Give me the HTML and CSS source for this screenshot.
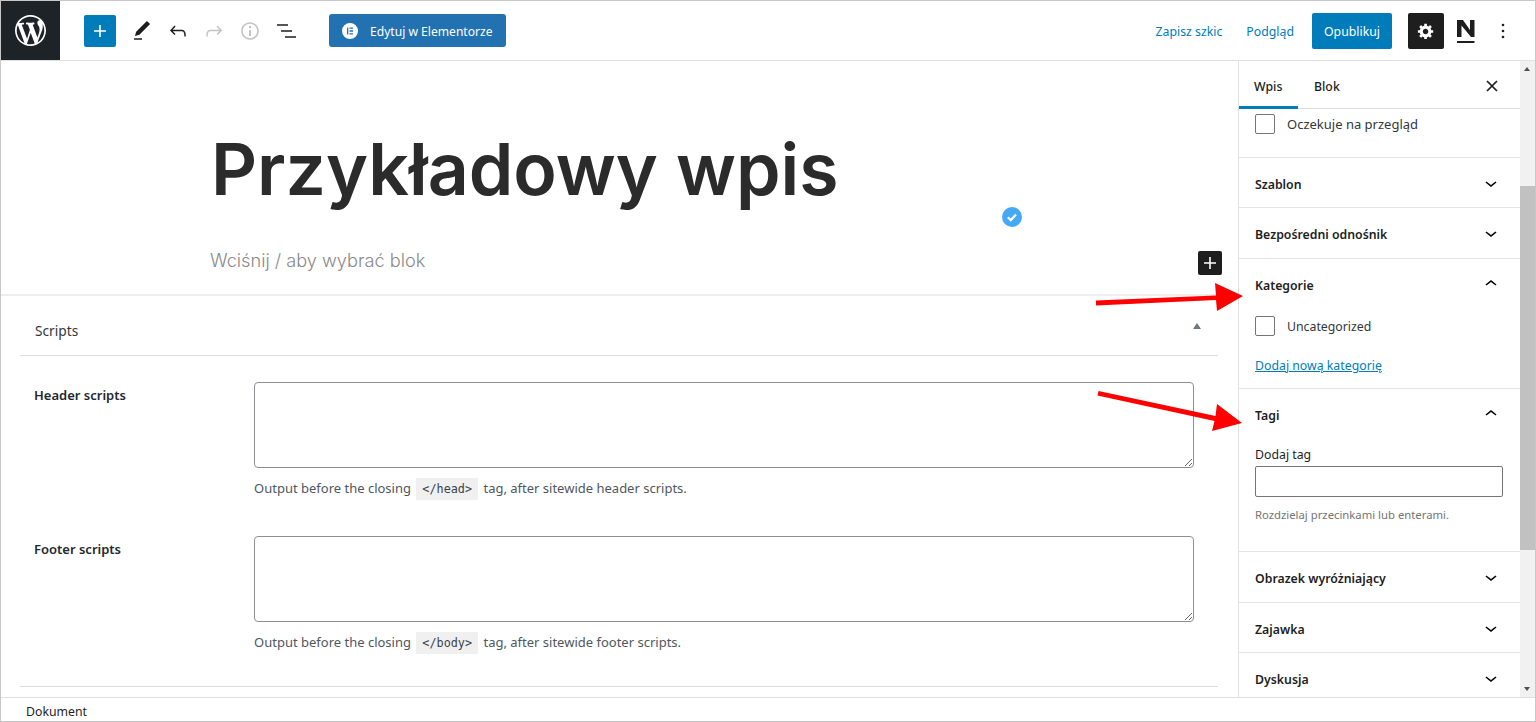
FILE: index.html
```html
<!DOCTYPE html>
<html lang="pl">
<head>
  <meta charset="UTF-8">
  <meta name="viewport" content="width=device-width, initial-scale=1.0">
  <title>Przykładowy wpis</title>
  <link rel="stylesheet" href="styles.css">
</head>
<body>
<div class="app">
  <!-- Top bar -->
  <header class="topbar">
    <div class="wp-logo">
      <svg viewBox="0 0 20 20" width="31" height="31"><path fill="#fff" d="M20 10c0-5.51-4.49-10-10-10C4.48 0 0 4.49 0 10c0 5.52 4.48 10 10 10 5.51 0 10-4.48 10-10zM7.78 15.37L4.37 6.22c.55-.02 1.17-.08 1.17-.08.5-.06.44-1.13-.06-1.11 0 0-1.45.11-2.37.11-.18 0-.37 0-.58-.01C4.12 2.69 6.87 1.11 10 1.11c2.33 0 4.45.87 6.05 2.34-.68-.11-1.65.39-1.65 1.58 0 .74.45 1.36.9 2.1.35.61.55 1.36.55 2.46 0 1.49-1.4 5-1.4 5l-3.03-8.37c.54-.02.82-.17.82-.17.5-.05.44-1.25-.06-1.22 0 0-1.44.12-2.38.12-.87 0-2.33-.12-2.33-.12-.5-.03-.56 1.2-.06 1.22l.92.08 1.26 3.41zM17.41 10c.24-.64.74-1.87.43-4.25.7 1.29 1.05 2.71 1.05 4.25 0 3.29-1.73 6.24-4.4 7.78.97-2.59 1.94-5.2 2.92-7.78zM6.1 18.09C3.12 16.65 1.11 13.53 1.11 10c0-1.3.23-2.48.72-3.59C3.25 10.3 4.67 14.2 6.1 18.09zm4.03-6.63l2.58 6.98c-.86.29-1.76.45-2.71.45-.79 0-1.57-.11-2.29-.33.81-2.38 1.62-4.74 2.42-7.1z"/></svg>
    </div>
    <div class="tools">
      <div class="btn-add">
        <svg viewBox="0 0 24 24" width="24" height="24"><path fill="#fff" d="M18 11.2h-5.2V6h-1.6v5.2H6v1.6h5.2V18h1.6v-5.2H18z"/></svg>
      </div>
      <div class="tool">
        <svg viewBox="0 0 24 24" width="24" height="24"><path fill="#1e1e1e" d="M20.1 5.1L16.9 2 6.2 12.7l-1.3 4.4 4.5-1.3L20.1 5.1zM4 20.8h8v-1.5H4v1.5z"/></svg>
      </div>
      <div class="tool">
        <svg viewBox="0 0 24 24" width="24" height="24"><path fill="#1e1e1e" d="M18.3 11.7c-.6-.6-1.4-.9-2.3-.9H6.7l2.9-3.3-1.1-1-4.5 5L8.5 16l1-1-2.7-2.7H16c.5 0 .9.2 1.3.5 1 1 1 3.4 1 4.5v.3h1.5v-.2c0-1.5 0-4.3-1.5-5.7z"/></svg>
      </div>
      <div class="tool">
        <svg viewBox="0 0 24 24" width="24" height="24"><path fill="#c4c4c4" d="M15.6 6.5l-1.1 1 2.9 3.3H8c-.9 0-1.7.3-2.3.9-1.4 1.5-1.4 4.2-1.4 5.6v.2h1.5v-.3c0-1.1 0-3.5 1-4.5.3-.3.7-.5 1.3-.5h9.2L14.5 15l1.1 1.1 4.6-4.6-4.6-5z"/></svg>
      </div>
      <div class="tool">
        <svg viewBox="0 0 24 24" width="24" height="24"><path fill="#c4c4c4" d="M12 3.2c-4.8 0-8.8 3.9-8.8 8.8 0 4.8 3.9 8.8 8.8 8.8 4.8 0 8.8-3.9 8.8-8.8 0-4.8-4-8.8-8.8-8.8zm0 16c-4 0-7.2-3.3-7.2-7.2C4.8 8 8 4.8 12 4.8s7.2 3.3 7.2 7.2c0 4-3.2 7.2-7.2 7.2zM11 17h2v-6h-2v6zm0-8h2V7h-2v2z"/></svg>
      </div>
      <div class="tool">
        <svg viewBox="0 0 24 24" width="24" height="24"><path fill="#1e1e1e" d="M3 5.200h11v1.500H3zM7 11.200h11v1.500H7zM11 17.200h11v1.500H11z"/></svg>
      </div>
      <div class="btn-elementor">
        <svg viewBox="0 0 16 16" width="16" height="16"><path fill="#fff" fill-rule="evenodd" d="M8 0a8 8 0 1 0 0 16A8 8 0 0 0 8 0zM5 4.500h1.300v7H5zM7.500 4.500H11v1.300H7.500zM7.500 7.350H11v1.300H7.500zM7.500 10.200H11v1.300H7.500z"/></svg>
        <span>Edytuj w Elementorze</span>
      </div>
    </div>
    <div class="actions">
      <a class="action-link">Zapisz szkic</a>
      <a class="action-link">Podgląd</a>
      <div class="btn-publish">Opublikuj</div>
      <div class="btn-settings">
        <svg viewBox="0 0 20 20" width="18" height="18"><path fill="#fff" d="M18 12h-2.18c-.17.7-.44 1.35-.81 1.93l1.54 1.54-2.1 2.1-1.54-1.54c-.58.36-1.23.63-1.91.79V19H8v-2.18c-.68-.16-1.33-.43-1.91-.79l-1.54 1.54-2.12-2.12 1.54-1.54c-.36-.58-.63-1.23-.79-1.91H1V9.03h2.17c.16-.7.44-1.35.8-1.94L2.43 5.55l2.1-2.1 1.54 1.54c.58-.37 1.24-.64 1.93-.81V2h3v2.18c.68.16 1.33.43 1.91.79l1.54-1.54 2.12 2.12-1.54 1.54c.36.59.64 1.24.8 1.94H18V12zm-8.5 1.5c1.66 0 3-1.34 3-3s-1.34-3-3-3-3 1.34-3 3 1.34 3 3 3z"/></svg>
      </div>
      <div class="n-logo">
        <svg viewBox="0 0 18 24" width="18" height="24"><path fill="#1e1e1e" d="M0 0h6l7 10V0h4.500v17h-3.500L4.500 5.500V17H0zM0 21h17.500v2H0z"/></svg>
      </div>
      <div class="kebab">
        <svg viewBox="0 0 24 24" width="24" height="24"><circle cx="12" cy="6" r="1.300" fill="#1e1e1e"/><circle cx="12" cy="12" r="1.300" fill="#1e1e1e"/><circle cx="12" cy="18" r="1.300" fill="#1e1e1e"/></svg>
      </div>
    </div>
  </header>

  <div class="workspace">
    <!-- Editor -->
    <main class="editor">
      <div class="post-area">
        <h1 class="post-title">Przykładowy wpis</h1>
        <p class="block-hint">Wciśnij / aby wybrać blok</p>
        <div class="check-badge">
          <svg viewBox="0 0 20 20" width="20" height="20"><circle cx="10" cy="10" r="10" fill="#46a9f5"/><path fill="none" stroke="#fff" stroke-width="2.200" d="M5.800 10.300l3 2.800 5.200-5.600"/></svg>
        </div>
        <div class="block-add">
          <svg viewBox="0 0 24 24" width="24" height="24"><path fill="#fff" d="M18 11.200h-5.200V6h-1.600v5.200H6v1.600h5.200V18h1.600v-5.200H18z"/></svg>
        </div>
      </div>
      <section class="metabox">
        <div class="metabox-head">
          <span>Scripts</span>
          <i class="caret-up"></i>
        </div>
        <div class="script-row">
          <label class="script-label">Header scripts</label>
          <div class="script-field">
            <textarea class="script-input"></textarea>
            <p class="script-desc">Output before the closing <code>&lt;/head&gt;</code> tag, after sitewide header scripts.</p>
          </div>
        </div>
        <div class="script-row">
          <label class="script-label">Footer scripts</label>
          <div class="script-field">
            <textarea class="script-input"></textarea>
            <p class="script-desc">Output before the closing <code>&lt;/body&gt;</code> tag, after sitewide footer scripts.</p>
          </div>
        </div>
      </section>
    </main>

    <!-- Sidebar -->
    <aside class="sidebar">
      <div class="tabs">
        <div class="tab active">Wpis</div>
        <div class="tab">Blok</div>
        <svg class="tabs-close" viewBox="0 0 24 24" width="24" height="24"><path fill="none" stroke="#1e1e1e" stroke-width="1.700" d="M7 7l10 10M17 7L7 17"/></svg>
      </div>
      <div class="panel pending">
        <label class="check-row"><span class="checkbox"></span>Oczekuje na przegląd</label>
      </div>
      <div class="panel-head head-low">
        <span>Szablon</span>
        <svg viewBox="0 0 24 24" width="24" height="24"><path d="M17.500 11.600L12 16l-5.500-4.400.9-1.200L12 14l4.500-3.600 1 1.200z"/></svg>
      </div>
      <div class="panel-head head-tall">
        <span>Bezpośredni odnośnik</span>
        <svg viewBox="0 0 24 24" width="24" height="24"><path d="M17.500 11.600L12 16l-5.500-4.400.9-1.200L12 14l4.500-3.600 1 1.200z"/></svg>
      </div>
      <div class="panel categories">
        <div class="panel-title">
          <span>Kategorie</span>
          <svg viewBox="0 0 24 24" width="24" height="24"><path d="M6.500 12.400L12 8l5.500 4.400-.9 1.200L12 10l-4.500 3.600-1-1.200z"/></svg>
        </div>
        <label class="check-row"><span class="checkbox"></span>Uncategorized</label>
        <a class="add-category">Dodaj nową kategorię</a>
      </div>
      <div class="panel tags">
        <div class="panel-title">
          <span>Tagi</span>
          <svg viewBox="0 0 24 24" width="24" height="24"><path d="M6.500 12.400L12 8l5.500 4.400-.9 1.200L12 10l-4.500 3.600-1-1.200z"/></svg>
        </div>
        <div class="tag-label">Dodaj tag</div>
        <input class="tag-input" type="text">
        <div class="tag-help">Rozdzielaj przecinkami lub enterami.</div>
      </div>
      <div class="panel-head head-tall">
        <span>Obrazek wyróżniający</span>
        <svg viewBox="0 0 24 24" width="24" height="24"><path d="M17.500 11.600L12 16l-5.500-4.400.9-1.200L12 14l4.500-3.600 1 1.200z"/></svg>
      </div>
      <div class="panel-head head-low">
        <span>Zajawka</span>
        <svg viewBox="0 0 24 24" width="24" height="24"><path d="M17.500 11.600L12 16l-5.500-4.400.9-1.200L12 14l4.500-3.600 1 1.200z"/></svg>
      </div>
      <div class="panel-head head-low">
        <span>Dyskusja</span>
        <svg viewBox="0 0 24 24" width="24" height="24"><path d="M17.500 11.600L12 16l-5.500-4.400.9-1.200L12 14l4.500-3.600 1 1.200z"/></svg>
      </div>
    </aside>

    <!-- Scrollbar -->
    <div class="scrollbar">
      <i class="scroll-up"></i>
      <div class="scroll-thumb"></div>
      <i class="scroll-down"></i>
    </div>
  </div>

  <footer class="statusbar">Dokument</footer>

  <!-- Red annotation arrows -->
  <svg class="arrows" viewBox="0 0 1536 722" width="1536" height="722">
    <path fill="#f00" d="M1096 300.500L1216 295.500 1215 283 1243 296 1217 311 1216 300 1096 305.500z"/>
    <path fill="#f00" d="M1098.500 391L1215.500 416 1217 404 1242 423 1212 431 1214.500 421 1097.500 395.500z"/>
  </svg>
</div>
</body>
</html>
```

FILE: styles.css
```css
* {
  box-sizing: border-box;
}

body {
  margin: 0;
  font-family: "Noto Sans", sans-serif;
  font-size: 12.300px;
  color: #1e1e1e;
  background: #fff;
  overflow: hidden;
}

.app {
  position: relative;
  width: 1536px;
  height: 722px;
  display: flex;
  flex-direction: column;
  border: 1px solid #c8c8c8;
  overflow: hidden;
}

/* Top bar */
.topbar {
  height: 60px;
  flex-shrink: 0;
  display: flex;
  align-items: center;
  border-bottom: 1px solid #e0e0e0;
}

.wp-logo {
  width: 59px;
  height: 59px;
  margin-top: -1px;
  background: #1e2327;
  display: flex;
  align-items: center;
  justify-content: center;
}

.tools {
  display: flex;
  align-items: center;
  padding-left: 24px;
}

.btn-add {
  width: 32px;
  height: 32px;
  margin-right: 8px;
  border-radius: 2px;
  background: #007cba;
  display: flex;
  align-items: center;
  justify-content: center;
}

.tool {
  width: 36px;
  height: 36px;
  display: flex;
  align-items: center;
  justify-content: center;
}

.btn-elementor {
  width: 177px;
  height: 33px;
  margin-left: 25px;
  padding: 1px 0 0 13px;
  border-radius: 3px;
  background: #2271b1;
  color: #fff;
  font-size: 12.100px;
  display: flex;
  align-items: center;
  gap: 12px;
}

.btn-elementor svg {
  margin-top: -1px;
}

.actions {
  margin-left: auto;
  display: flex;
  align-items: center;
}

.action-link {
  padding-top: 1px;
  color: #007cba;
  margin-right: 24px;
}

.action-link:nth-child(2) {
  margin-right: 18px;
}

.btn-publish {
  width: 80px;
  height: 36px;
  padding-top: 1px;
  border-radius: 2px;
  background: #007cba;
  color: #fff;
  display: flex;
  align-items: center;
  justify-content: center;
}

.btn-settings {
  width: 36px;
  height: 36px;
  margin-left: 16px;
  border-radius: 2px;
  background: #1e1e1e;
  display: flex;
  align-items: center;
  justify-content: center;
}

.n-logo {
  margin-left: 13px;
  height: 24px;
  margin-top: 2px;
}

.kebab {
  width: 24px;
  height: 24px;
  margin: 0 20px 0 16px;
}

/* Main area */
.workspace {
  flex: 1;
  min-height: 0;
  display: flex;
}

.editor {
  flex: 1;
  min-width: 0;
  overflow: hidden;
}

.post-area {
  position: relative;
  height: 235px;
  padding: 62px 0 0 210px;
  border-bottom: 2px solid #eee;
}

.post-title {
  margin: 0;
  font-family: Inter, sans-serif;
  font-size: 71.500px;
  font-weight: 600;
  line-height: 92px;
  color: #2b2b2b;
}

.block-hint {
  margin: 33px 0 0 -1px;
  font-family: Inter, sans-serif;
  font-size: 18.200px;
  font-weight: 300;
  line-height: 24px;
  color: #8a8a8a;
}

.check-badge {
  position: absolute;
  left: 1001px;
  top: 146px;
  width: 20px;
  height: 20px;
}

.block-add {
  position: absolute;
  left: 1197px;
  top: 190px;
  width: 24px;
  height: 24px;
  border-radius: 2px;
  background: #1e1e1e;
}

/* Scripts metabox */
.metabox {
  margin: 0 20px 0 19px;
}

.metabox-head {
  height: 60px;
  padding: 10px 17px 0 15px;
  border-bottom: 1px solid #ddd;
  font-size: 13.700px;
  color: #32373c;
  display: flex;
  align-items: center;
  justify-content: space-between;
}

.caret-up {
  width: 0;
  height: 0;
  margin-top: -10px;
  border-left: 4px solid transparent;
  border-right: 4px solid transparent;
  border-bottom: 6px solid #72777c;
}

.script-row {
  display: flex;
  padding-left: 14px;
}

.script-row:nth-child(2) {
  padding-top: 26px;
}

.script-row:nth-child(3) {
  padding-top: 36px;
  padding-bottom: 32px;
  border-bottom: 1px solid #ddd;
}

.script-label {
  width: 220px;
  flex-shrink: 0;
  padding-top: 4px;
  font-size: 13px;
  font-weight: 600;
  line-height: 18px;
  color: #23282d;
}

.script-field {
  width: 940px;
}

.script-input {
  display: block;
  width: 940px;
  height: 86px;
  border: 1px solid #8c8f94;
  border-radius: 4px;
  background: #fff;
}

.script-desc {
  margin: 9px 0 0;
  font-size: 13px;
  line-height: 22px;
  color: #50575e;
}

.script-desc code {
  margin: 0 2px;
  padding: 4px 6px;
  background: #f0f0f1;
  font-family: "DejaVu Sans Mono", monospace;
  font-size: 11.800px;
  color: #3c434a;
}

/* Sidebar */
.sidebar {
  width: 282px;
  flex-shrink: 0;
  border-left: 1px solid #e0e0e0;
  overflow: hidden;
}

.tabs {
  height: 48px;
  padding-right: 16px;
  border-bottom: 1px solid #ddd;
  display: flex;
  align-items: stretch;
}

.tab {
  padding: 0 16px;
  font-weight: 500;
  line-height: 52px;
  color: #1e1e1e;
}

.tab.active {
  width: 60px;
  margin-left: -1px;
  margin-bottom: -1px;
  border-bottom: 3px solid #007cba;
}

.tabs-close {
  margin: 13px 0 0 auto;
}

.panel,
.panel-head {
  border-bottom: 1px solid #e2e4e7;
}

.panel-head,
.panel-title {
  padding: 0 17px 0 16px;
  display: flex;
  align-items: center;
  justify-content: space-between;
  font-weight: 600;
  color: #1e1e1e;
}

.panel-head span,
.panel-title span {
  padding-top: 2px;
}

.panel-head {
  height: 50px;
}

.head-low span {
  padding-top: 3px;
}

.head-tall {
  height: 51px;
}

.panel-title {
  height: 50px;
}

.pending {
  height: 49px;
  padding: 5px 16px 0;
  font-size: 13px;
}

.check-row {
  display: flex;
  align-items: center;
  gap: 12px;
  color: #32373c;
}

.checkbox {
  width: 20px;
  height: 20px;
  border: 1px solid #757575;
  border-radius: 2px;
  flex-shrink: 0;
}

.categories {
  height: 130px;
}

.categories .check-row {
  margin: 7px 16px 0;
}

.add-category {
  display: block;
  margin: 21px 16px 0;
  color: #007cba;
  text-decoration: underline;
}

.tags {
  height: 163px;
}

.tag-label {
  margin: 7px 16px 0;
  line-height: 18px;
  color: #1e1e1e;
}

.tag-input {
  display: block;
  width: 248px;
  height: 31px;
  margin: 2px 16px 0;
  border: 1px solid #757575;
  border-radius: 2px;
  background: #fff;
}

.tag-help {
  margin: 10px 16px 0;
  font-size: 11.300px;
  line-height: 16px;
  color: #757575;
}

/* Scrollbar */
.scrollbar {
  position: relative;
  width: 15px;
  flex-shrink: 0;
  padding-top: 125px;
  background: #f1f1f1;
}

.scroll-thumb {
  height: 364px;
  background: #c1c1c1;
}

.scroll-up,
.scroll-down {
  position: absolute;
  left: 4px;
  width: 0;
  height: 0;
  border-left: 3.500px solid transparent;
  border-right: 3.500px solid transparent;
}

.scroll-up {
  top: 6px;
  border-bottom: 4px solid #505050;
}

.scroll-down {
  bottom: 6px;
  border-top: 4px solid #505050;
}

/* Footer */
.statusbar {
  height: 24px;
  flex-shrink: 0;
  padding-left: 25px;
  border-top: 1px solid #e0e0e0;
  line-height: 28px;
  color: #1e1e1e;
}

.arrows {
  position: absolute;
  left: -1px;
  top: -1px;
  pointer-events: none;
}
```
